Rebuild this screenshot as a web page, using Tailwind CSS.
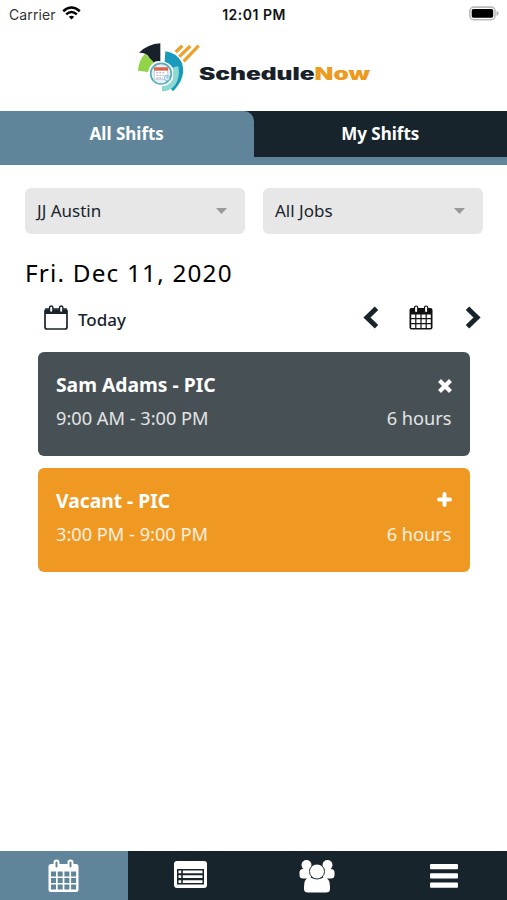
<!DOCTYPE html>
<html lang="en">
<head>
<meta charset="utf-8">
<title>ScheduleNow</title>
<script src="https://cdn.jsdelivr.net/npm/@tailwindcss/browser@4"></script>
</head>
<body class="bg-white">
<div class="flex h-[900px] w-[507px] flex-col overflow-hidden bg-white font-['Noto_Sans',sans-serif] text-[#18242b]">
  <div class="grid h-7 grid-cols-3 items-center pl-[9px] pr-[8px] font-['Inter',sans-serif] text-[#111]">
    <div class="flex items-center gap-[6px]">
      <span class="text-[14px] tracking-[0.1px] text-[#333]">Carrier</span>
      <svg class="-mt-[2px] h-[14px] w-[19px]" viewBox="0 0 19 14" fill="none" stroke="#000" stroke-width="2.5"><path d="M1.2 5.2Q9.5-2.2 17.8 5.2M4.2 8.4Q9.5 3.7 14.8 8.4"/><path d="M6.8 10.8Q9.5 8.5 12.2 10.8L9.5 13.5Z" fill="#000" stroke="none"/></svg>
    </div>
    <span class="text-center text-[14px] font-semibold tracking-[0.5px]">12:01 PM</span>
    <svg class="-mt-px h-[15px] w-[30px] justify-self-end" viewBox="0 0 31 15"><rect x=".9" y=".9" width="26" height="13" rx="4" fill="#fff" stroke="#bbb" stroke-width="1.6"/><rect x="2.8" y="2.8" width="22.2" height="9.2" rx="1.8"/><path d="M28.5 5v5q2-1 2-2.5T28.5 5" fill="#aaa"/></svg>
  </div>
  <header class="flex h-[83px] items-start pl-[130px] pt-2">
    <svg class="h-16 w-[69px] shrink-0 overflow-visible" viewBox="0 0 207 192">
      <path d="M27 50Q54 24 91 22V76Q78 73 68 82L54 59Q44 49 27 50Z" fill="#182129"/>
      <path d="M24 104Q26 72 45 53L72 79Q58 90 54 108Z" fill="#93d34a"/>
      <path d="M106 46Q139 50 155 79Q171 124 129 166L116 151Q137 131 133 106Q127 84 104 77Z" fill="#189abd"/>
      <path d="M130 94L145 91Q151 124 136 146Q121 165 96 166V151Q121 148 129 128Z" fill="#8cd9d2"/>
      <circle cx="93" cy="113" r="31" fill="#e4f0f2" stroke="#59abb8" stroke-width="5"/>
      <rect x="73" y="95" width="40" height="35" rx="3" fill="#fff" stroke="#b3b9c2" stroke-width="2"/>
      <path d="M72 94h42v10H72z" fill="#df654d"/><path d="M79 110h27m-27 8h27m-27 8h20" stroke="#b8bfc9" stroke-width="4" stroke-dasharray="6 3"/>
      <circle cx="111" cy="126" r="8" fill="#d9f2ff" stroke="#5aadd0" stroke-width="2"/><path d="M111 121v5h4" fill="none" stroke="#3c86a4" stroke-width="1.5"/>
      <path d="M137 48L157 29M148 62L181 30M161 76L206 29" stroke="#eca22d" stroke-width="10"/>
    </svg>
    <div class="mt-[27px] h-[22px] w-[172px]"><div class="w-max origin-left scale-x-[1.44] font-['Inter',sans-serif] text-[17px] leading-[22px] font-black text-[#182129]">Schedule<span class="text-[#ec9b20]">Now</span></div></div>
  </header>
  <nav class="h-[54px] bg-[#60859b] text-center text-[17px] font-bold text-white">
    <div class="grid h-[46px] grid-cols-2 bg-[#18242c] leading-[46px]">
      <div class="rounded-tr-[10px] bg-[#60859b]">All Shifts</div>
      <div>My Shifts</div>
    </div>
  </nav>
  <main class="flex-1">
    <div class="mt-[23px] flex gap-[18px] pl-[25px] text-[17px]">
      <div class="flex h-[46px] w-[220px] items-center justify-between rounded-md bg-[#e7e7e7] pl-3 pr-[18px]"><span>JJ Austin</span><svg class="h-[6px] w-[11px]" viewBox="0 0 11 6"><path d="M0 0h11L5.5 6z" fill="#999"/></svg></div>
      <div class="flex h-[46px] w-[220px] items-center justify-between rounded-md bg-[#e7e7e7] pl-3 pr-[18px]"><span>All Jobs</span><svg class="h-[6px] w-[11px]" viewBox="0 0 11 6"><path d="M0 0h11L5.5 6z" fill="#999"/></svg></div>
    </div>
    <h1 class="mt-[21px] pl-[25px] text-[24.3px] leading-9 tracking-[1.2px] text-black">Fri. Dec 11, 2020</h1>
    <div class="mt-[12px] flex h-[31px] items-center pl-[44px] pr-[26px]">
      <svg class="-mt-[2px] h-[25px] w-6" viewBox="0 0 24 25"><path d="M2 4h20l1 2v16q0 2-2 2H3q-2 0-2-2V6z" fill="#fff" stroke="#18242b" stroke-width="1.7"/><path d="M1 4.5h22V9H1z" fill="#18242b"/><rect x="5.5" y="1" width="3.4" height="6.5" rx="1.7" fill="#fff" stroke="#18242b" stroke-width="1.4"/><rect x="15.5" y="1" width="3.4" height="6.5" rx="1.7" fill="#fff" stroke="#18242b" stroke-width="1.4"/></svg>
      <span class="ml-[10px] mt-[2px] text-[17px] font-medium">Today</span>
      <svg class="-mt-[2px] ml-auto h-[23px] w-4" viewBox="0 0 16 23" fill="none" stroke="#18242b" stroke-width="5"><path d="M13.5 2.3L4 11.5L13.5 20.7"/></svg>
      <svg class="-mt-[2px] ml-[30px] h-[25px] w-6" viewBox="0 0 24 25"><rect x=".5" y="3" width="23" height="21.5" rx="2" fill="#111"/><path d="M2.2 9.5h4v3.5h-4zm5.2 0h4v3.5h-4zm5.2 0h4v3.5h-4zm5.2 0h4v3.5h-4zM2.2 14.2h4v3.8h-4zm5.2 0h4v3.8h-4zm5.2 0h4v3.8h-4zm5.2 0h4v3.8h-4zM2.2 19.2h4v3.8h-4zm5.2 0h4v3.8h-4zm5.2 0h4v3.8h-4zm5.2 0h4v3.8h-4z" fill="#fff"/><rect x="5.5" y="1" width="3.2" height="6.5" rx="1.6" fill="#fff" stroke="#111" stroke-width="1.2"/><rect x="15.5" y="1" width="3.2" height="6.5" rx="1.6" fill="#fff" stroke="#111" stroke-width="1.2"/></svg>
      <svg class="-mt-[2px] ml-[32px] h-[23px] w-4" viewBox="0 0 16 23" fill="none" stroke="#18242b" stroke-width="5"><path d="M2.5 2.3L12 11.5L2.5 20.7"/></svg>
    </div>
    <div class="mt-[17.5px] flex flex-col gap-3 pl-[37.5px] pr-[37px] text-white">
      <section class="h-[104px] rounded-[6px] bg-[#475055] pl-[18.5px] pr-[18.5px] pt-[18px]">
        <div class="flex h-8 items-center justify-between"><h2 class="text-[19.3px] font-bold">Sam Adams - PIC</h2><svg class="h-[14px] w-[14px]" viewBox="0 0 14 14"><path d="M3 3l8 8m0-8l-8 8" stroke="#fff" stroke-width="4.2" stroke-linecap="square"/></svg></div>
        <div class="flex h-[35px] items-center justify-between text-[18.2px] text-white/85"><span>9:00 AM - 3:00 PM</span><span>6 hours</span></div>
      </section>
      <section class="h-[104px] rounded-[6px] bg-[#ef9922] pl-[18.5px] pr-[18.5px] pt-[18px]">
        <div class="flex h-8 items-center justify-between"><h2 class="text-[19.3px] font-bold">Vacant - PIC</h2><svg class="-mt-1 h-[15px] w-[15px]" viewBox="0 0 15 15"><path d="M7.5 2v11M2 7.5h11" stroke="#fff" stroke-width="4" stroke-linecap="round"/></svg></div>
        <div class="flex h-[35px] items-center justify-between text-[18.2px] text-white/85"><span>3:00 PM - 9:00 PM</span><span>6 hours</span></div>
      </section>
    </div>
  </main>
  <footer class="grid h-[49px] grid-cols-[127.5px_125.5px_127px_127px] items-center justify-items-center bg-[#18242c]">
    <div class="flex h-full w-full items-center justify-center bg-[#60859b]">
      <svg class="h-[33px] w-[31px]" viewBox="0 0 31 33"><rect x=".5" y="5" width="30" height="28" rx="2.5" fill="#fff"/><path d="M3 12.5h5v5H3zm6.7 0h5v5h-5zm6.7 0h5v5h-5zm6.7 0h5v5h-5zM3 19h5v5H3zm6.7 0h5v5h-5zm6.7 0h5v5h-5zm6.7 0h5v5h-5zM3 25.5h5v5H3zm6.7 0h5v5h-5zm6.7 0h5v5h-5zm6.7 0h5v5h-5z" fill="#60859b"/><rect x="6.5" y="1.5" width="4" height="8" rx="2" fill="#60859b" stroke="#fff" stroke-width="2"/><rect x="20.5" y="1.5" width="4" height="8" rx="2" fill="#60859b" stroke="#fff" stroke-width="2"/></svg>
    </div>
    <svg class="-mt-[2px] h-[27px] w-[33px]" viewBox="0 0 33 27"><rect width="33" height="27" rx="3" fill="#fff"/><path d="M3 8h27v15.5H3z" fill="#18242c"/><path d="M4.5 9.5h2.7v2.7H4.5zm4.3 0h19.7v2.7H8.8zM4.5 14.3h2.7V17H4.5zm4.3 0h19.7V17H8.8zM4.5 19.2h2.7v2.7H4.5zm4.3 0h19.7v2.7H8.8z" fill="#fff"/></svg>
    <svg class="h-[34px] w-[36px]" viewBox="0 0 36 34" fill="#fff"><circle cx="7.5" cy="6" r="5"/><circle cx="28.5" cy="6" r="5"/><rect x=".5" y="10" width="12" height="9.5" rx="3.5"/><rect x="23.5" y="10" width="12" height="9.5" rx="3.5"/><path d="M10 18q8 4 16 0q5 2 5 10v2q0 3.5-4 3.5H9q-4 0-4-3.5v-2Q5 20 10 18"/><circle cx="18" cy="12.5" r="7.5" stroke="#18242c" stroke-width=".9"/></svg>
    <svg class="h-6 w-7" viewBox="0 0 28 24" fill="#fff"><rect y="0" width="28" height="5.2" rx="1"/><rect y="9.3" width="28" height="5.2" rx="1"/><rect y="18.6" width="28" height="5.2" rx="1"/></svg>
  </footer>
</div>
</body>
</html>
